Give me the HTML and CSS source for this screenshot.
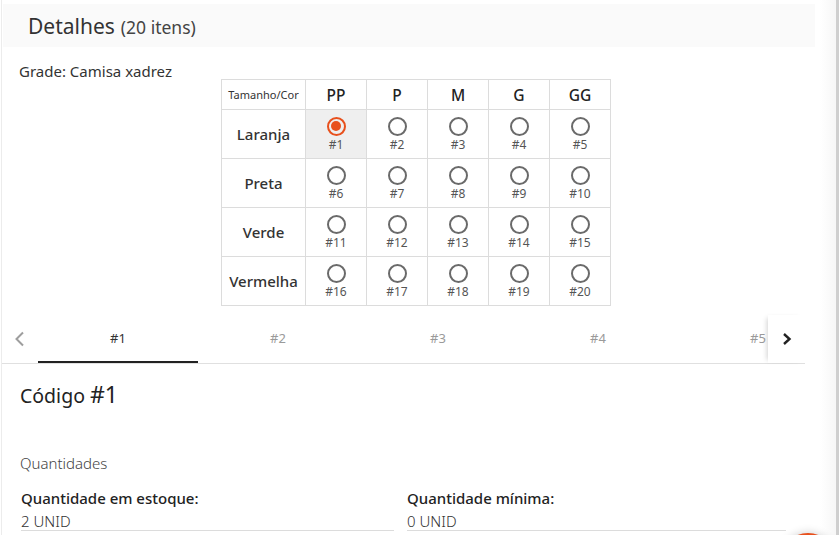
FILE: index.html
```html
<!DOCTYPE html>
<html lang="pt">
<head>
<meta charset="utf-8">
<title>Detalhes</title>
<link rel="stylesheet" href="styles.css">
</head>
<body>
<div class="page">
  <div class="main">
    <div class="header"><span class="h-title">Detalhes</span> <span class="h-count">(20 itens)</span></div>
    <div class="content">
      <div class="grade">Grade: Camisa xadrez</div>
      <table class="grid">
        <thead>
          <tr><th class="corner">Tamanho/Cor</th><th>PP</th><th>P</th><th>M</th><th>G</th><th>GG</th></tr>
        </thead>
        <tbody>
          <tr><th>Laranja</th>
            <td class="sel"><span class="radio on"></span><span class="num">#1</span></td>
            <td><span class="radio"></span><span class="num">#2</span></td>
            <td><span class="radio"></span><span class="num">#3</span></td>
            <td><span class="radio"></span><span class="num">#4</span></td>
            <td><span class="radio"></span><span class="num">#5</span></td></tr>
          <tr><th>Preta</th>
            <td><span class="radio"></span><span class="num">#6</span></td>
            <td><span class="radio"></span><span class="num">#7</span></td>
            <td><span class="radio"></span><span class="num">#8</span></td>
            <td><span class="radio"></span><span class="num">#9</span></td>
            <td><span class="radio"></span><span class="num">#10</span></td></tr>
          <tr><th>Verde</th>
            <td><span class="radio"></span><span class="num">#11</span></td>
            <td><span class="radio"></span><span class="num">#12</span></td>
            <td><span class="radio"></span><span class="num">#13</span></td>
            <td><span class="radio"></span><span class="num">#14</span></td>
            <td><span class="radio"></span><span class="num">#15</span></td></tr>
          <tr><th>Vermelha</th>
            <td><span class="radio"></span><span class="num">#16</span></td>
            <td><span class="radio"></span><span class="num">#17</span></td>
            <td><span class="radio"></span><span class="num">#18</span></td>
            <td><span class="radio"></span><span class="num">#19</span></td>
            <td><span class="radio"></span><span class="num">#20</span></td></tr>
        </tbody>
      </table>
    </div>
    <div class="tabbar">
      <div class="tab-btn prev"><svg width="12" height="16" viewBox="0 0 12 16"><polyline points="9,1.5 2.5,8 9,14.5" fill="none" stroke="#9e9e9e" stroke-width="2"/></svg></div>
      <div class="tabs">
        <div class="tab active">#1</div>
        <div class="tab">#2</div>
        <div class="tab">#3</div>
        <div class="tab">#4</div>
        <div class="tab">#5</div>
      </div>
      <div class="tab-btn next"><svg width="12" height="16" viewBox="0 0 12 16"><polyline points="3,3 8.5,8 3,13" fill="none" stroke="#222" stroke-width="2.4"/></svg></div>
    </div>
    <div class="detail">
      <h2 class="code">Código <span class="code-num">#1</span></h2>
      <div class="section">Quantidades</div>
      <div class="fields">
        <div class="field"><div class="f-label">Quantidade em estoque:</div><div class="f-value">2 UNID</div></div>
        <div class="field"><div class="f-label">Quantidade mínima:</div><div class="f-value">0 UNID</div></div>
      </div>
    </div>
    <div class="fab"></div>
  </div>
  <div class="scrollbar"></div>
</div>
</body>
</html>
```

FILE: styles.css
```css
* { box-sizing: border-box; }
html, body { margin: 0; padding: 0; }
body {
  width: 839px;
  height: 535px;
  overflow: hidden;
  background: #fff;
  font-family: "Noto Sans", "Open Sans", sans-serif;
  color: #333;
}
.page {
  display: flex;
  height: 535px;
}
.main {
  position: relative;
  width: 835px;
  margin-left: 1px;
  border-left: 1px solid #ececec;
  background: linear-gradient(to right, #fff 0, #fff 818px, #f6f6f6 835px);
  overflow: hidden;
}
.scrollbar {
  width: 3px;
  background: #cfcfcf;
}
.header {
  margin: 4px 0 0 1px;
  width: 812px;
  height: 43px;
  background: #fafafa;
  padding-left: 25px;
  display: flex;
  align-items: center;
  gap: 6px;
}
.h-title { font-size: 21px; color: #333; }
.h-count { font-size: 17.5px; color: #444; padding-top: 3px; }
.content {
  width: 813px;
  padding: 14px 0 0 17px;
}
.grade {
  font-size: 15px;
  line-height: 20px;
  color: #333;
}
.grid {
  margin: -2px auto 0;
  border-collapse: collapse;
  text-align: center;
  position: relative;
  left: -1px;
}
.grid th, .grid td {
  border: 1px solid #dcdcdc;
  padding: 0;
}
.grid thead th {
  height: 30px;
  width: 61px;
  font-size: 15.5px;
  font-weight: 500;
  color: #222;
}
.grid thead th.corner {
  width: 84px;
  font-size: 11px;
  font-weight: 400;
  color: #333;
}
.grid tbody th {
  height: 49px;
  font-size: 15px;
  font-weight: 500;
  color: #333;
}
.grid td {
  height: 49px;
  vertical-align: middle;
}
.grid td.sel { background: #efefef; }
.radio {
  display: block;
  width: 19px;
  height: 19px;
  margin: 0 auto;
  border: 2px solid #6a6a6a;
  border-radius: 50%;
  position: relative;
}
.radio.on { border-color: #e8501c; }
.radio.on::after {
  content: "";
  position: absolute;
  left: 2.5px;
  top: 2.5px;
  width: 10px;
  height: 10px;
  border-radius: 50%;
  background: #e8501c;
}
.num {
  display: block;
  font-size: 12px;
  line-height: 15px;
  color: #555;
  margin-top: 1px;
}
.tabbar {
  margin-top: 9px;
  width: 803px;
  height: 49px;
  display: flex;
  border-bottom: 1px solid #e0e0e0;
}
.tab-btn {
  flex: none;
  display: flex;
  align-items: center;
  justify-content: center;
  background: #fff;
}
.tab-btn.prev { width: 36px; justify-content: flex-start; padding-left: 12px; }
.tab-btn.next {
  width: 37px;
  position: relative;
  box-shadow: -4px 0 5px -3px rgba(0,0,0,0.18);
  justify-content: flex-start;
  padding-left: 13px;
}
.tabs {
  flex: 1;
  display: flex;
  overflow: hidden;
}
.tab {
  flex: none;
  width: 160px;
  display: flex;
  align-items: center;
  justify-content: center;
  font-size: 13px;
  color: #9a9a9a;
  border-bottom: 2px solid transparent;
}
.tab.active { color: #333; border-bottom-color: #222; }
.detail {
  padding: 0 51px 0 18px;
}
.code {
  margin: 16px 0 0;
  font-size: 19.5px;
  font-weight: 400;
  color: #222;
  line-height: 28px;
}
.code-num { font-size: 23px; }
.section {
  margin-top: 43px;
  font-size: 15px;
  font-weight: 300;
  color: #444;
  line-height: 20px;
}
.fields {
  margin-top: 15px;
  display: grid;
  grid-template-columns: 373px 379px;
  gap: 13px;
  padding-left: 1px;
}
.field {
  border-bottom: 1px solid #dcdcdc;
}
.f-label {
  font-size: 15px;
  font-weight: 500;
  color: #222;
  line-height: 20px;
}
.f-value {
  margin-top: 4px;
  font-size: 15px;
  font-weight: 300;
  color: #333;
  line-height: 18px;
}
.fab {
  position: absolute;
  left: 778px;
  top: 533px;
  width: 56px;
  height: 56px;
  border-radius: 50%;
  background: #e8501c;
  box-shadow: 0 0 10px rgba(0,0,0,0.2);
}
```
